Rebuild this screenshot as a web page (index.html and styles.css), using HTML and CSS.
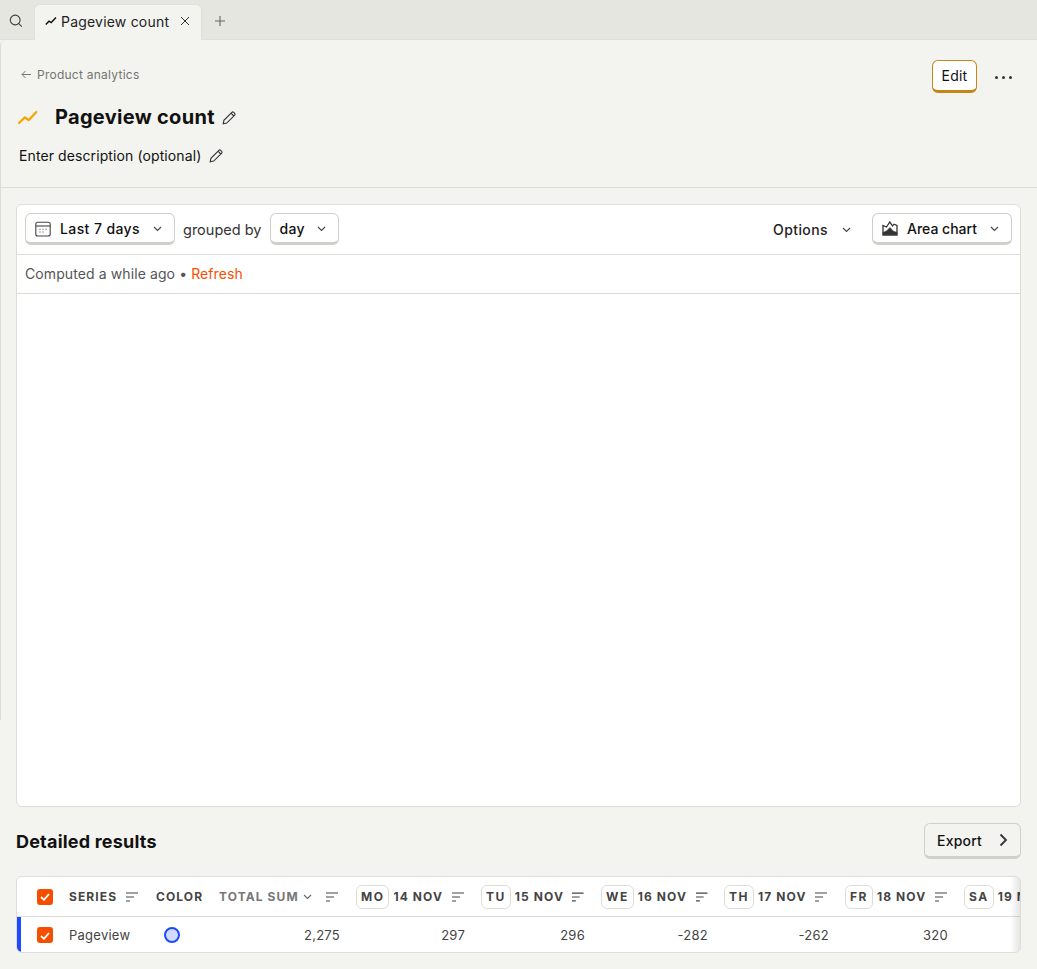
FILE: index.html
```html
<!DOCTYPE html>
<html lang="en">
<head>
  <meta charset="utf-8">
  <title>Pageview count</title>
  <link rel="stylesheet" href="styles.css">
</head>
<body>
  <div class="tabbar">
    <span class="tabbar-search">
      <svg width="14" height="14" viewBox="0 0 14 14" fill="none" stroke="#3d3f3a" stroke-width="1.1"><circle cx="6.2" cy="6" r="4.9"/><path d="M9.8 9.7l3 3"/></svg>
    </span>
    <div class="tab">
      <svg class="tab-icon" width="12" height="10" viewBox="0 0 12 10" fill="none" stroke="#111" stroke-width="1.4"><path d="M.8 8.4l3.2-3.2 2.2 1.4 4.8-5"/></svg>
      <span>Pageview count</span>
      <svg class="tab-close" width="10" height="10" viewBox="0 0 10 10" fill="none" stroke="#333" stroke-width="1"><path d="M1 1l8 8M9 1l-8 8"/></svg>
    </div>
    <span class="tabbar-add">
      <svg width="10" height="10" viewBox="0 0 10 10" fill="none" stroke="#666" stroke-width="1.1"><path d="M5 0v10M0 5h10"/></svg>
    </span>
  </div>

  <div class="main">
    <div class="head">
      <div class="head-top">
        <a class="crumb">
          <svg width="11" height="9" viewBox="0 0 11 9" fill="none" stroke="#777" stroke-width="1"><path d="M10 4.5H1M4.5 1L1 4.5 4.5 8"/></svg>
          Product analytics
        </a>
        <div class="head-actions">
          <button class="btn-edit">Edit</button>
          <span class="dots"><i></i><i></i><i></i></span>
        </div>
      </div>
      <div class="title-row">
        <svg class="title-icon" width="20" height="16" viewBox="0 0 20 16" fill="none" stroke="#f7a501" stroke-width="2.2" stroke-linecap="round"><path d="M1 14l5.800-5.500 4 2.500 7.500-8"/></svg>
        <h1>Pageview count</h1>
        <svg class="pencil" width="15" height="15" viewBox="0 0 15 15" fill="none" stroke="#333" stroke-width="1.1"><path d="M1.200 13.800l.7-3.500 8-8a1.300 1.300 0 0 1 1.800 0l1 1a1.300 1.300 0 0 1 0 1.800l-8 8zM9 3.200l2.800 2.800"/></svg>
      </div>
      <div class="desc-row">
        <span>Enter description (optional)</span>
        <svg class="pencil" width="15" height="15" viewBox="0 0 15 15" fill="none" stroke="#333" stroke-width="1.1"><path d="M1.200 13.800l.7-3.500 8-8a1.300 1.300 0 0 1 1.800 0l1 1a1.300 1.300 0 0 1 0 1.800l-8 8zM9 3.200l2.800 2.800"/></svg>
      </div>
    </div>

    <div class="content">
      <div class="card chart-card">
        <div class="filters">
          <button class="btn btn-date">
            <svg width="16" height="16" viewBox="0 0 16 16" fill="none" stroke="#444" stroke-width="1.1"><rect x=".8" y="1.200" width="14.400" height="13.800" rx="2"/><path d="M.8 5h14.400"/><path d="M4.500 8.200h1M7.500 8.200h1M10.500 8.200h1M4.500 11h1M7.500 11h1"/></svg>
            <span>Last 7 days</span>
            <svg class="chev" width="9" height="6" viewBox="0 0 9 6" fill="none" stroke="#444" stroke-width="1.1"><path d="M1 1l3.500 3.500L8 1"/></svg>
          </button>
          <span class="grouped">grouped by</span>
          <button class="btn btn-day">
            <span>day</span>
            <svg class="chev" width="9" height="6" viewBox="0 0 9 6" fill="none" stroke="#444" stroke-width="1.1"><path d="M1 1l3.500 3.500L8 1"/></svg>
          </button>
          <span class="spacer"></span>
          <span class="options">
            Options
            <svg class="chev" width="9" height="6" viewBox="0 0 9 6" fill="none" stroke="#444" stroke-width="1.1"><path d="M1 1l3.500 3.500L8 1"/></svg>
          </span>
          <button class="btn btn-type">
            <svg width="16" height="15" viewBox="0 0 16 15" fill="none" stroke="#333" stroke-width="1.300"><path d="M1 4.500V14h14V4.500L12 3.200 10.500 5 7.800 1 4.500 6 1 4.500z"/><path d="M1 13.500v-2l3.500-1.500L8 6.500l3 3.500 4 1.500v2H1z" fill="#333" stroke-width=".6"/></svg>
            <span>Area chart</span>
            <svg class="chev" width="9" height="6" viewBox="0 0 9 6" fill="none" stroke="#444" stroke-width="1.1"><path d="M1 1l3.500 3.500L8 1"/></svg>
          </button>
        </div>
        <div class="computed">Computed a while ago &bull; <a class="refresh">Refresh</a></div>
        <div class="chart"></div>
      </div>

      <div class="results-head">
        <h2>Detailed results</h2>
        <button class="btn-export">
          Export
          <svg width="9" height="14" viewBox="0 0 9 14" fill="none" stroke="#333" stroke-width="1.800"><path d="M1.500 1.500L7 7l-5.500 5.500"/></svg>
        </button>
      </div>

      <div class="card table-card">
        <table class="results">
          <colgroup>
            <col class="c-check"><col class="c-series"><col class="c-color"><col class="c-total">
            <col class="c-mo"><col class="c-tu"><col class="c-we"><col class="c-th"><col class="c-fr"><col class="c-sa">
          </colgroup>
          <thead>
            <tr>
              <th class="cell-check"><span class="check"><svg width="10" height="8" viewBox="0 0 10 8" fill="none" stroke="#fff" stroke-width="1.800"><path d="M1 4l3 2.800L9 1"/></svg></span></th>
              <th><span class="th-in">Series <svg class="sort" width="14" height="10" viewBox="0 0 14 10" stroke="#444" stroke-width="1.200"><path d="M1 1h12M1 5h8M1 9h4"/></svg></span></th>
              <th>Color</th>
              <th class="th-total"><span class="th-in"><span class="muted">Total sum</span> <svg width="9" height="6" viewBox="0 0 9 6" fill="none" stroke="#666" stroke-width="1.100"><path d="M1 1l3.500 3.500L8 1"/></svg> <svg class="sort sort-total" width="14" height="10" viewBox="0 0 14 10" stroke="#444" stroke-width="1.200"><path d="M1 1h12M1 5h8M1 9h4"/></svg></span></th>
              <th><span class="th-in"><span class="day">Mo</span>14 Nov <svg class="sort" width="14" height="10" viewBox="0 0 14 10" stroke="#444" stroke-width="1.200"><path d="M1 1h12M1 5h8M1 9h4"/></svg></span></th>
              <th><span class="th-in"><span class="day">Tu</span>15 Nov <svg class="sort" width="14" height="10" viewBox="0 0 14 10" stroke="#444" stroke-width="1.200"><path d="M1 1h12M1 5h8M1 9h4"/></svg></span></th>
              <th><span class="th-in"><span class="day">We</span>16 Nov <svg class="sort" width="14" height="10" viewBox="0 0 14 10" stroke="#444" stroke-width="1.200"><path d="M1 1h12M1 5h8M1 9h4"/></svg></span></th>
              <th><span class="th-in"><span class="day">Th</span>17 Nov <svg class="sort" width="14" height="10" viewBox="0 0 14 10" stroke="#444" stroke-width="1.200"><path d="M1 1h12M1 5h8M1 9h4"/></svg></span></th>
              <th><span class="th-in"><span class="day">Fr</span>18 Nov <svg class="sort" width="14" height="10" viewBox="0 0 14 10" stroke="#444" stroke-width="1.200"><path d="M1 1h12M1 5h8M1 9h4"/></svg></span></th>
              <th><span class="th-in"><span class="day">Sa</span>19 Nov</span></th>
            </tr>
          </thead>
          <tbody>
            <tr>
              <td class="cell-check cell-series"><span class="check"><svg width="10" height="8" viewBox="0 0 10 8" fill="none" stroke="#fff" stroke-width="1.800"><path d="M1 4l3 2.800L9 1"/></svg></span></td>
              <td>Pageview</td>
              <td><span class="swatch"></span></td>
              <td class="num">2,275</td>
              <td class="num">297</td>
              <td class="num">296</td>
              <td class="num">-282</td>
              <td class="num">-262</td>
              <td class="num">320</td>
              <td class="num"></td>
            </tr>
          </tbody>
        </table>
        <div class="fade"></div>
      </div>
    </div>
  </div>
</body>
</html>
```

FILE: styles.css
```css
html, body {margin:0; padding:0;}
body {font-family:Inter,"Liberation Sans",sans-serif; color:#111; font-size:14px; background:#f3f4ef; height:969px; overflow:hidden;}
button {font-family:inherit; color:inherit; cursor:pointer;}
h1, h2 {margin:0;}

/* tabs */
.tabbar {height:40px; box-sizing:border-box; background:#e5e6df; display:flex; align-items:flex-end; border-bottom:1px solid #dfe0d9;}
.tabbar-search {width:34px; height:36px; box-sizing:border-box; padding:11px 0 0 9px;}
.tab {width:168px; height:36px; margin-bottom:-1px; box-sizing:border-box; background:#f3f4ef; border-radius:6px 6px 0 0; border:1px solid #e0e1da; border-bottom:0; display:flex; align-items:center; padding:0 11px 3px 10px; gap:4px; font-size:14px; letter-spacing:.2px; color:#222;}
.tab-close {margin-left:auto;}
.tabbar-add {padding:0 0 6px 13px; height:27px; box-sizing:border-box;}

/* page */
.main {height:680px; box-sizing:border-box; border-left:1px solid #dcddd6; border-radius:6px 0 0 0;}
.head {height:148px; box-sizing:border-box; border-bottom:1px solid #dcddd6; margin-left:-1px; padding:20px 25px 0 18px;}
.head-top {display:flex; justify-content:space-between; align-items:flex-start; height:36px;}
.crumb {display:flex; align-items:center; gap:5px; font-size:12px; letter-spacing:.25px; color:#73756f; padding:7px 0 0 3px;}
.head-actions {display:flex; align-items:center; gap:18px;}
.btn-edit {width:45px; height:33px; padding:0; background:#fff; border:1px solid #c58518; border-bottom-width:3px; border-radius:6px; font-size:14px; letter-spacing:.2px;}
.dots {display:flex; gap:4px; padding-top:1px;}
.dots i {width:3px; height:3px; border-radius:50%; background:#333;}
.title-row {display:flex; align-items:center; height:30px; margin-top:6px;}
.title-icon {width:20px; margin-right:17px;}
.title-row h1 {font-size:20px; font-weight:700; letter-spacing:.3px; margin-right:7px;}
.desc-row {display:flex; align-items:center; gap:8px; font-size:14px; letter-spacing:.1px; margin-top:15px; padding-left:1px;}

.content {padding:16px 16px 16px 15px;}
.card {background:#fff; border:1px solid #dcddd6; border-radius:6px;}
.chart-card {width:1003px; height:601px; box-sizing:content-box;}

.filters {height:50px; box-sizing:border-box; display:flex; align-items:center; padding:0 8px 1px; border-bottom:1px solid #dcddd6;}
.btn {height:32px; box-sizing:border-box; background:#fff; border:1px solid #cfd0c9; border-bottom-width:3px; border-radius:6px; display:flex; align-items:center; padding:1px 12px 0 9px; font-size:14px; font-weight:500; letter-spacing:.4px;}
.btn-date {width:150px; gap:9px;}
.btn-date .chev, .btn-day .chev, .btn-type .chev {margin-left:auto;}
.grouped {margin:0 9px 0 8px; padding-top:1px; font-size:14.500px; color:#333;}
.btn-day {width:69px; padding-left:8px;}
.spacer {flex:1;}
.options {display:flex; align-items:center; gap:14px; font-size:14px; font-weight:500; letter-spacing:.4px; margin-right:21px; padding-top:1px; color:#222;}
.btn-type {width:140px; gap:9px; letter-spacing:0;}
.computed {height:39px; box-sizing:border-box; border-bottom:1px solid #dcddd6; padding:10px 8px 0; color:#555; font-size:14px; letter-spacing:.1px;}
.refresh {color:#f54e00;}

.results-head {display:flex; justify-content:space-between; align-items:center; height:36px; margin-top:16px;}
.results-head h2 {font-size:18px; font-weight:700; letter-spacing:.2px;}
.btn-export {width:97px; height:36px; display:flex; align-items:center; justify-content:space-between; padding:0 12px; background:#f3f4ef; border:1px solid #cfd0c9; border-bottom-width:3px; border-radius:6px; font-size:14px; font-weight:500; letter-spacing:.2px;}

.table-card {position:relative; margin-top:17px; width:1003px; height:75px; overflow:hidden;}
.fade {position:absolute; top:0; right:0; bottom:0; width:10px; background:linear-gradient(to right,rgba(0,0,0,0),rgba(0,0,0,.1));}
.results {border-collapse:collapse; table-layout:fixed; width:1100px;}
.c-check {width:44px;} .c-series {width:87px;} .c-color {width:63px;} .c-total {width:137px;}
.c-mo {width:125px;} .c-tu {width:120px;} .c-we {width:123px;} .c-th {width:121px;} .c-fr {width:119px;} .c-sa {width:161px;}
.results th {height:39px; padding:0 8px; text-align:left; font-size:12px; font-weight:700; letter-spacing:1.1px; text-transform:uppercase; color:#444; white-space:nowrap; border-bottom:1px solid #dcddd6;}
.results td {height:36px; padding:0 8px; font-size:13px; letter-spacing:.25px; color:#444;}
.th-in {display:flex; align-items:center; gap:4px;}
.th-in .sort {margin-left:3.500px;}
.results .th-total {padding-right:9px;}
.th-total .muted {color:#777;}
.th-total .sort-total {margin-left:auto;}
.day {display:inline-block; height:22px; line-height:22px; padding:0 4px; border:1px solid #dcddd6; border-radius:6px; letter-spacing:1.500px;}
.cell-check {padding:0 0 0 20px !important;}
.cell-series {box-shadow:inset 4px 0 0 #1d4aff;}
.check {display:block; width:16px; height:16px; background:#f54e00; border-radius:3px; text-align:center; line-height:16px;}
.check svg {display:inline-block; vertical-align:0;}
.swatch {display:block; width:12px; height:12px; margin-left:8px; border-radius:50%; border:2px solid #1d4aff; background:#d2dbff;}
.num {text-align:right;}
```
